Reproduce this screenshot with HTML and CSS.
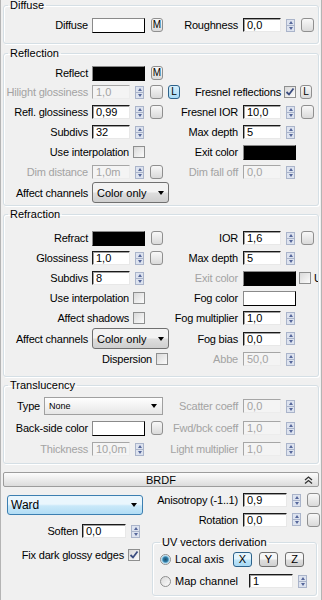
FILE: index.html
```html
<!DOCTYPE html>
<html lang="en">
  <head>
    <meta charset="UTF-8" />
    <meta name="viewport" content="width=device-width, initial-scale=1.0" />
    <title>VRayMtl</title>
    <link rel="stylesheet" href="styles.css">
  </head>
  <body>
    <div class="panel">
      <!-- diffuse -->
      <fieldset class="grp g-diffuse">
        <legend>Diffuse</legend>
        <div class="line">
          <div class="cell">
            <span class="lbl">Diffuse</span>
            <span class="swatch white"></span>
            <span class="btn m">M</span>
          </div>
          <div class="cell r">
            <span class="lbl">Roughness</span>
            <span class="num">0,0</span>
            <span class="spin"><i></i><i></i></span>
            <span class="btn"></span>
          </div>
        </div>
      </fieldset>

      <!-- reflection -->
      <fieldset class="grp g-refl">
        <legend>Reflection</legend>
        <div class="line first">
          <div class="cell">
            <span class="lbl">Reflect</span>
            <span class="swatch black"></span>
            <span class="btn m">M</span>
          </div>
          <div class="cell r"></div>
        </div>
        <div class="line">
          <div class="cell">
            <span class="lbl off">Hilight glossiness</span>
            <span class="num off">1,0</span>
            <span class="spin"><i></i><i></i></span>
            <span class="btn"></span>
            <span class="btn l on">L</span>
          </div>
          <div class="cell r">
            <span class="lbl fres">Fresnel reflections</span>
            <span class="chk checked">
              <svg width="10" height="10" viewBox="0 0 10 10"><path d="M1.5 5 L4 7.5 L8.5 1.5" fill="none" stroke="#3b4d80" stroke-width="1.8"/></svg>
            </span>
            <span class="btn l gap">L</span>
          </div>
        </div>
        <div class="line">
          <div class="cell">
            <span class="lbl">Refl. glossiness</span>
            <span class="num">0,99</span>
            <span class="spin"><i></i><i></i></span>
            <span class="btn"></span>
          </div>
          <div class="cell r">
            <span class="lbl">Fresnel IOR</span>
            <span class="num">10,0</span>
            <span class="spin"><i></i><i></i></span>
            <span class="btn"></span>
          </div>
        </div>
        <div class="line">
          <div class="cell">
            <span class="lbl">Subdivs</span>
            <span class="num">32</span>
            <span class="spin"><i></i><i></i></span>
          </div>
          <div class="cell r">
            <span class="lbl">Max depth</span>
            <span class="num">5</span>
            <span class="spin"><i></i><i></i></span>
          </div>
        </div>
        <div class="line">
          <div class="cell">
            <span class="lbl long">Use interpolation</span>
            <span class="chk"></span>
          </div>
          <div class="cell r">
            <span class="lbl">Exit color</span>
            <span class="swatch black"></span>
          </div>
        </div>
        <div class="line">
          <div class="cell">
            <span class="lbl off">Dim distance</span>
            <span class="num off">1,0m</span>
            <span class="spin"><i></i><i></i></span>
            <span class="btn"></span>
          </div>
          <div class="cell r">
            <span class="lbl off">Dim fall off</span>
            <span class="num off">0,0</span>
            <span class="spin"><i></i><i></i></span>
          </div>
        </div>
        <div class="line">
          <div class="cell">
            <span class="lbl">Affect channels</span>
            <span class="combo">Color only<b class="arrow"></b></span>
          </div>
          <div class="cell r"></div>
        </div>
      </fieldset>

      <!-- refraction -->
      <fieldset class="grp g-refr">
        <legend>Refraction</legend>
        <div class="line first">
          <div class="cell">
            <span class="lbl">Refract</span>
            <span class="swatch black"></span>
            <span class="btn m"></span>
          </div>
          <div class="cell r">
            <span class="lbl">IOR</span>
            <span class="num">1,6</span>
            <span class="spin"><i></i><i></i></span>
            <span class="btn"></span>
          </div>
        </div>
        <div class="line">
          <div class="cell">
            <span class="lbl">Glossiness</span>
            <span class="num">1,0</span>
            <span class="spin"><i></i><i></i></span>
            <span class="btn"></span>
          </div>
          <div class="cell r">
            <span class="lbl">Max depth</span>
            <span class="num">5</span>
            <span class="spin"><i></i><i></i></span>
          </div>
        </div>
        <div class="line">
          <div class="cell">
            <span class="lbl">Subdivs</span>
            <span class="num">8</span>
            <span class="spin"><i></i><i></i></span>
          </div>
          <div class="cell r clip">
            <span class="lbl off">Exit color</span>
            <span class="swatch black"></span>
            <span class="chk near"></span>
            <span class="cut">U</span>
          </div>
        </div>
        <div class="line">
          <div class="cell">
            <span class="lbl long">Use interpolation</span>
            <span class="chk"></span>
          </div>
          <div class="cell r">
            <span class="lbl">Fog color</span>
            <span class="swatch white"></span>
          </div>
        </div>
        <div class="line">
          <div class="cell">
            <span class="lbl long">Affect shadows</span>
            <span class="chk"></span>
          </div>
          <div class="cell r">
            <span class="lbl">Fog multiplier</span>
            <span class="num">1,0</span>
            <span class="spin"><i></i><i></i></span>
          </div>
        </div>
        <div class="line tall">
          <div class="cell">
            <span class="lbl">Affect channels</span>
            <span class="combo">Color only<b class="arrow"></b></span>
          </div>
          <div class="cell r">
            <span class="lbl">Fog bias</span>
            <span class="num">0,0</span>
            <span class="spin"><i></i><i></i></span>
          </div>
        </div>
        <div class="line">
          <div class="cell">
            <span class="lbl disp">Dispersion</span>
            <span class="chk"></span>
          </div>
          <div class="cell r">
            <span class="lbl off">Abbe</span>
            <span class="num off">50,0</span>
            <span class="spin"><i></i><i></i></span>
          </div>
        </div>
      </fieldset>

      <!-- translucency -->
      <fieldset class="grp g-trans">
        <legend>Translucency</legend>
        <div class="line first">
          <div class="cell">
            <span class="lbl type">Type</span>
            <span class="flat">None<b class="arrow"></b></span>
          </div>
          <div class="cell r">
            <span class="lbl off">Scatter coeff</span>
            <span class="num off">0,0</span>
            <span class="spin"><i></i><i></i></span>
          </div>
        </div>
        <div class="line">
          <div class="cell">
            <span class="lbl">Back-side color</span>
            <span class="swatch white"></span>
            <span class="btn m"></span>
          </div>
          <div class="cell r">
            <span class="lbl off">Fwd/bck coeff</span>
            <span class="num off">1,0</span>
            <span class="spin"><i></i><i></i></span>
          </div>
        </div>
        <div class="line">
          <div class="cell">
            <span class="lbl off">Thickness</span>
            <span class="num off">10,0m</span>
            <span class="spin"><i></i><i></i></span>
          </div>
          <div class="cell r">
            <span class="lbl off">Light multiplier</span>
            <span class="num off">1,0</span>
            <span class="spin"><i></i><i></i></span>
          </div>
        </div>
      </fieldset>

      <!-- brdf rollout -->
      <div class="roll">
        <span></span>
        <span class="roll-title">BRDF</span>
        <svg class="chev" width="9" height="8" viewBox="0 0 9 8"><path d="M1 4 L4.5 1 L8 4 M1 7.5 L4.5 4.5 L8 7.5" fill="none" stroke="#333" stroke-width="1.3"/></svg>
      </div>
      <div class="brdf">
        <div class="bl">
          <span class="ward">Ward<b class="arrow"></b></span>
          <div class="row soften">
            <span class="lbl">Soften</span>
            <span class="num wide">0,0</span>
            <span class="spin"><i></i><i></i></span>
          </div>
          <div class="row fix">
            <span class="lbl">Fix dark glossy edges</span>
            <span class="chk checked">
              <svg width="10" height="10" viewBox="0 0 10 10"><path d="M1.5 5 L4 7.5 L8.5 1.5" fill="none" stroke="#3b4d80" stroke-width="1.8"/></svg>
            </span>
          </div>
        </div>
        <div class="br">
          <div class="row aniso">
            <span class="lbl">Anisotropy (-1..1)</span>
            <span class="num wide">0,9</span>
            <span class="spin"><i></i><i></i></span>
            <span class="btn"></span>
          </div>
          <div class="row rot">
            <span class="lbl">Rotation</span>
            <span class="num wide">0,0</span>
            <span class="spin"><i></i><i></i></span>
            <span class="btn"></span>
          </div>
          <fieldset class="grp g-uv">
            <legend>UV vectors derivation</legend>
            <div class="row uv">
              <span class="radio on"></span>
              <span class="rlbl">Local axis</span>
              <span class="axis on">X</span>
              <span class="axis">Y</span>
              <span class="axis">Z</span>
            </div>
            <div class="row uv">
              <span class="radio"></span>
              <span class="rlbl map">Map channel</span>
              <span class="num wide">1</span>
              <span class="spin"><i></i><i></i></span>
            </div>
          </fieldset>
        </div>
      </div>
    </div>
  </body>
</html>
```

FILE: styles.css
```css
* {
  box-sizing: border-box;
}

body {
  margin: 0;
  background: #f0f0f0;
  font-family: "Liberation Sans", Arial, sans-serif;
  font-size: 11px;
  color: #000;
}

.panel {
  width: 322px;
  height: 600px;
  border-left: 1px solid #b4b4b4;
  border-right: 1px solid #b4b4b4;
  overflow: hidden;
}

/* group boxes */
.grp {
  margin: 0 2px;
  padding: 0;
  min-width: 0;
  border: 1px solid #d5dfe5;
  border-radius: 3px;
  box-shadow: inset 1px 1px #fff, 1px 1px #fff;
}

.grp legend {
  margin-left: 4px;
  padding: 0 2px;
  height: 11px;
  line-height: 11px;
}

.g-diffuse {
  padding-bottom: 8px;
}

.g-diffuse .line {
  margin-top: 4px;
}

.g-refl {
  margin-top: 4px;
  padding-bottom: 3px;
}

.g-refl .line.first {
  margin-top: 5px;
  height: 18px;
}

.g-refr {
  margin-top: 3px;
  padding-bottom: 7px;
}

.g-refr .line.first {
  margin-top: 8px;
}

.g-trans {
  margin-top: 3px;
  padding-bottom: 4px;
}

.g-trans .line {
  height: 22px;
}

.g-trans .line.first {
  margin-top: 4px;
}

.g-trans .line:last-child {
  height: 20px;
}

/* rows */
.line {
  display: grid;
  grid-template-columns: 166px 1fr;
  height: 20px;
  align-items: center;
}

.line.tall {
  height: 21px;
}

.cell {
  display: flex;
  align-items: center;
  height: 100%;
}

.cell.clip {
  overflow: hidden;
}

.lbl {
  flex-shrink: 0;
  width: 84px;
  margin-right: 4px;
  text-align: right;
  white-space: nowrap;
  letter-spacing: -0.2px;
}

.cell.r .lbl {
  width: 68px;
  margin-right: 5px;
}

.lbl.long {
  width: 125px;
}

.lbl.disp {
  width: 148px;
}

.cell.r .lbl.fres {
  width: 111px;
  margin-right: 3px;
}

.lbl.type {
  width: 36px;
}

.off {
  color: #a3a3a3;
}

/* controls */
.num {
  flex-shrink: 0;
  width: 38px;
  height: 14px;
  padding-left: 3px;
  line-height: 12px;
  background: #fff;
  border: 1px solid;
  border-color: #1a1a1a #e8e8e8 #e8e8e8 #1a1a1a;
  box-shadow: inset 1px 1px #a0a0a0;
  white-space: nowrap;
}

.num.off {
  background: #f4f4f4;
  border-color: #a6a6a6 #ececec #ececec #a6a6a6;
  box-shadow: none;
}

.num.wide {
  width: 44px;
}

.spin {
  flex-shrink: 0;
  display: flex;
  flex-direction: column;
  width: 9px;
  height: 13px;
  margin-left: 5px;
  border: 1px solid #aab4ca;
  background: #dde3ef;
}

.spin i {
  flex: 1;
  display: flex;
  align-items: center;
  justify-content: center;
}

.spin i:first-child {
  border-bottom: 1px solid #aab4ca;
}

.spin i::after {
  content: "";
  border-left: 2.5px solid transparent;
  border-right: 2.5px solid transparent;
  border-bottom: 3px solid #56679a;
}

.spin i:last-child::after {
  border-bottom: 0;
  border-top: 3px solid #56679a;
}

.btn {
  flex-shrink: 0;
  width: 13px;
  height: 14px;
  margin-left: 6px;
  border: 1px solid #8f8f8f;
  border-radius: 3px;
  background: linear-gradient(#f8f8f8, #dadada);
  font-size: 10px;
  line-height: 12px;
  text-align: center;
}

.btn.m {
  width: 12px;
  margin-left: 6px;
}

.btn.l {
  width: 12px;
  margin-left: 5px;
  font-size: 10px;
}

.btn.l.gap {
  margin-left: 4px;
}

.btn.l.on {
  border-color: #2c628b;
  background: linear-gradient(#d6eefb, #a9daf5);
}

.swatch {
  flex-shrink: 0;
  width: 53px;
  height: 15px;
  border: 1px solid;
  border-color: #8a8a8a #000 #000 #8a8a8a;
}

.swatch.white {
  background: #fff;
}

.swatch.black {
  background: #000;
}

.chk {
  flex-shrink: 0;
  display: flex;
  align-items: center;
  justify-content: center;
  width: 12px;
  height: 12px;
  border: 1px solid #8e8f8f;
  background: linear-gradient(135deg, #d9d9d9, #fbfbfb);
}

.chk.near {
  margin-left: 3px;
}

.cut {
  margin-left: 3px;
  white-space: nowrap;
}

.combo {
  flex-shrink: 0;
  display: flex;
  align-items: center;
  justify-content: space-between;
  width: 77px;
  height: 21px;
  padding: 0 4px 0 4px;
  border: 1px solid #707070;
  border-radius: 3px;
  background: linear-gradient(#f3f3f3 45%, #dddddd 55%, #cfcfcf);
  white-space: nowrap;
}

.arrow {
  border-left: 3.5px solid transparent;
  border-right: 3.5px solid transparent;
  border-top: 4px solid #000;
}

.flat {
  flex-shrink: 0;
  display: flex;
  align-items: center;
  justify-content: space-between;
  width: 119px;
  height: 18px;
  padding: 0 5px 0 4px;
  border: 1px solid #a0a0a0;
  background: linear-gradient(#fefefe, #e6e6e6);
  font-size: 9px;
}

/* brdf rollout */
.roll {
  display: grid;
  grid-template-columns: 1fr auto 1fr;
  align-items: center;
  height: 15px;
  margin: 8px 2px 0;
  border: 1px solid #9c9c9c;
  border-radius: 2px;
  background: linear-gradient(#fcfcfc, #dcdcdc);
}

.roll-title {
  line-height: 12px;
}

.chev {
  justify-self: end;
  margin-right: 5px;
}

.brdf {
  display: flex;
}

.bl {
  width: 145px;
  flex-shrink: 0;
}

.br {
  flex: 1;
  min-width: 0;
}

.row {
  display: flex;
  align-items: center;
  height: 20px;
}

.ward {
  display: flex;
  align-items: center;
  justify-content: space-between;
  width: 136px;
  height: 20px;
  margin: 8px 0 0 6px;
  padding: 0 5px 0 3px;
  border: 1px solid #3c7fb1;
  border-radius: 3px;
  background: linear-gradient(#eaf6fd 45%, #c9e8f9 55%, #b2ddf5);
  font-size: 12px;
}

.soften {
  margin-top: 6px;
}

.soften .lbl {
  width: 77px;
}

.fix {
  margin-top: 4px;
}

.fix .lbl {
  width: 123px;
}

.aniso {
  margin-top: 3px;
}

.aniso .lbl,
.rot .lbl {
  width: 92px;
  margin-right: 5px;
}

.aniso .btn,
.rot .btn {
  margin-left: 3px;
}

.spin + .btn {
  margin-left: 6px;
}

.rot {
  height: 19px;
}

.g-uv {
  margin: 8px 4px 0 6px;
  padding-bottom: 4px;
}

.g-uv legend {
  margin-left: 7px;
}

.uv {
  margin-top: 1px;
}

.uv + .uv {
  margin-top: 2px;
}

.radio {
  flex-shrink: 0;
  width: 11px;
  height: 11px;
  margin-left: 7px;
  border: 1px solid #8e8f8f;
  border-radius: 50%;
  background: linear-gradient(135deg, #d9d9d9, #fbfbfb);
}

.radio.on {
  background: radial-gradient(circle, #1c4f6e 0, #2f7ca6 2.5px, #8fc9e6 3.5px, #e9f4fa 4.5px);
}

.rlbl {
  width: 58px;
  margin-left: 4px;
  white-space: nowrap;
}

.rlbl.map {
  width: 74px;
}

.axis {
  width: 19px;
  height: 15px;
  margin-right: 7px;
  border: 1px solid #707070;
  border-radius: 3px;
  background: linear-gradient(#f6f6f6 45%, #dedede 55%, #d0d0d0);
  text-align: center;
  line-height: 13px;
}

.axis.on {
  border-color: #2c628b;
  background: linear-gradient(#e4f4fc 45%, #bde4f8 55%, #a7d9f5);
}
```
